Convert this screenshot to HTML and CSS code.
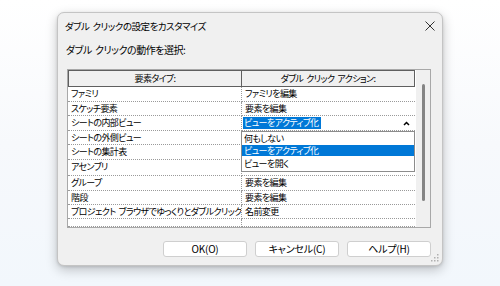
FILE: index.html
```html
<!DOCTYPE html>
<html lang="ja">
<head>
<meta charset="utf-8">
<link rel="stylesheet" href="styles.css">
</head>
<body>
<div class="page">
  <div class="dialog">
    <div class="titlebar">
      <span class="title">ダブル クリックの設定をカスタマイズ</span>
      <svg class="close" width="10" height="10" viewBox="0 0 10 10"><path d="M0.5 0.5 L9.5 9.5 M9.5 0.5 L0.5 9.5" stroke="#333" stroke-width="1" fill="none"/></svg>
    </div>
    <div class="prompt">ダブル クリックの動作を選択:</div>
    <div class="grid">
      <div class="table">
        <div class="hcell first">要素タイプ:</div><div class="hcell">ダブル クリック アクション:</div>
        <div class="cell c1">ファミリ</div><div class="cell">ファミリを編集</div>
        <div class="cell c1">スケッチ要素</div><div class="cell">要素を編集</div>
        <div class="cell c1">シートの内部ビュー</div><div class="cell combo"><span class="sel">ビューをアクティブ化</span><svg class="caret" width="7" height="5" viewBox="0 0 7 5"><path d="M1 4 L3.5 1.5 L6 4" stroke="#000" stroke-width="1.5" fill="none"/></svg></div>
        <div class="cell c1">シートの外側ビュー</div><div class="cell"></div>
        <div class="cell c1">シートの集計表</div><div class="cell"></div>
        <div class="cell c1">アセンブリ</div><div class="cell"></div>
        <div class="cell c1">グループ</div><div class="cell">要素を編集</div>
        <div class="cell c1">階段</div><div class="cell">要素を編集</div>
        <div class="cell c1">プロジェクト ブラウザでゆっくりとダブルクリック</div><div class="cell">名前変更</div>
        <div class="cell c1"></div><div class="cell"></div>
        <ul class="droplist">
          <li>何もしない</li>
          <li class="active">ビューをアクティブ化</li>
          <li>ビューを開く</li>
        </ul>
      </div>
      <div class="scrollbar"><div class="thumb"></div></div>
    </div>
    <div class="buttons">
      <button class="btn">OK(O)</button>
      <button class="btn">キャンセル(C)</button>
      <button class="btn">ヘルプ(H)</button>
    </div>
    <svg class="grip" width="8" height="8" viewBox="0 0 8 8">
      <rect x="6" y="0" width="1.5" height="1.5" fill="#b0b0b0"/>
      <rect x="3" y="3" width="1.5" height="1.5" fill="#b0b0b0"/>
      <rect x="6" y="3" width="1.5" height="1.5" fill="#b0b0b0"/>
      <rect x="0" y="6" width="1.5" height="1.5" fill="#b0b0b0"/>
      <rect x="3" y="6" width="1.5" height="1.5" fill="#b0b0b0"/>
      <rect x="6" y="6" width="1.5" height="1.5" fill="#b0b0b0"/>
    </svg>
  </div>
</div>
</body>
</html>
```
FILE: styles.css
```css
* { box-sizing: border-box; }
html, body { margin: 0; padding: 0; }
body {
  width: 500px;
  height: 286px;
  overflow: hidden;
  background: linear-gradient(180deg, #ffffff 0%, #f7f9fc 50%, #f2f7fc 100%);
  font-family: "Noto Sans CJK JP", "Noto Sans", sans-serif;
  font-feature-settings: "palt";
  font-size: 9px;
  letter-spacing: -0.6px;
  word-spacing: 1.5px;
  color: #000;
}
.page { padding: 12px 0 0 57px; }
.dialog {
  position: relative;
  width: 386px;
  height: 254px;
  background: #f0f0f0;
  border: 1px solid #c4c4c4;
  border-radius: 7px;
  box-shadow: 0 4px 12px rgba(0, 0, 0, 0.22), 0 1px 3px rgba(0, 0, 0, 0.12);
  display: flex;
  flex-direction: column;
}
.titlebar {
  height: 24px;
  display: flex;
  align-items: center;
  justify-content: space-between;
  padding: 1px 7px 0 7px;
}
.title { font-size: 9.5px; letter-spacing: -0.5px; line-height: 12px; }
.close { display: block; }
.prompt {
  margin: 6px 0 0 8px;
  height: 14px;
  line-height: 14px;
  font-size: 10px;
  letter-spacing: -0.5px;
}
.grid {
  margin: 12px 0 0 9px;
  width: 364px;
  height: 159px;
  border: 1px solid #a8a8a8;
  background: #fff;
  display: flex;
}
.table {
  position: relative;
  width: 347px;
  display: grid;
  grid-template-columns: 174px 173px;
  grid-template-rows: 17px 15px 14px 15px 14px 15px 16px 15px 14px 14px 8px;
}
.hcell {
  background: #f0f0f0;
  border: 1px solid #5f5f5f;
  border-left: none;
  text-align: center;
  line-height: 15px;
  white-space: nowrap;
}
.hcell.first { border-left: 1px solid #5f5f5f; }
.cell {
  border-bottom: 1px dotted #9a9a9a;
  padding-left: 3px;
  line-height: 14px;
  white-space: nowrap;
  overflow: hidden;
}
.cell.c1 { border-right: 1px dotted #9a9a9a; }
.combo {
  display: flex;
  align-items: center;
  justify-content: space-between;
  padding-right: 5px;
  padding-left: 1px;
}
.sel {
  background: #0078d7;
  color: #fff;
  line-height: 12px;
  padding: 0 2px 0 1px;
}
.caret { display: block; }
.droplist {
  position: absolute;
  left: 173px;
  top: 61px;
  width: 174px;
  height: 41px;
  margin: 0;
  padding: 0;
  list-style: none;
  background: #fff;
  border: 1px solid #8c8c8c;
}
.droplist li {
  height: 13px;
  line-height: 13px;
  padding-left: 2px;
  white-space: nowrap;
}
.droplist li.active { height: 11px; line-height: 11px; background: #0078d7; color: #fff; }
.droplist li:last-child { height: 15px; line-height: 15px; }
.scrollbar {
  width: 15px;
  background: #f0f0f0;
  border-left: 1px solid #ffffff;
  padding: 14px 0 0 6px;
}
.thumb {
  width: 3px;
  height: 117px;
  background: #858585;
  border-radius: 2px;
}
.buttons {
  margin-top: 13px;
  display: flex;
  justify-content: flex-end;
  gap: 8px;
  padding-right: 11px;
}
.btn {
  width: 84px;
  height: 16px;
  padding: 0;
  background: #fff;
  border: 1px solid #cfcfcf;
  border-radius: 3px;
  font-family: "Noto Sans CJK JP", "Noto Sans", sans-serif;
  font-feature-settings: "palt";
  font-size: 10px;
  letter-spacing: -0.2px;
  line-height: 14px;
  color: #000;
}
.grip {
  position: absolute;
  right: 3px;
  bottom: 3px;
}
```
